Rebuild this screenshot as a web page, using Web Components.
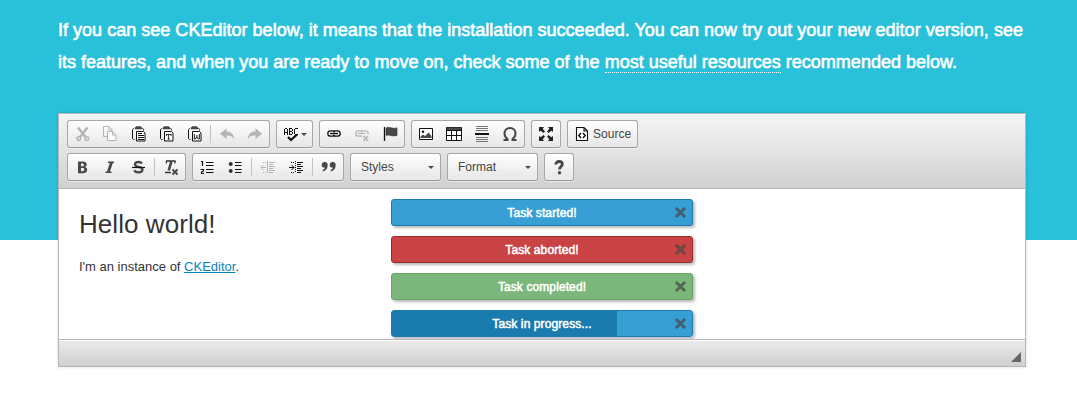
<!DOCTYPE html>
<html lang="en">
<head>
<meta charset="utf-8">
<title>CKEditor sample</title>
<style>
html,body{margin:0;height:100%;overflow:hidden;background:#fff}
body{font-family:"Liberation Sans",Arial,sans-serif}
</style>
</head>
<body>
<sample-page></sample-page>
<script>
const define=(name,html,setup)=>customElements.define(name,class extends HTMLElement{
  connectedCallback(){
    if(this.shadowRoot)return;
    const t=document.createElement('template');
    t.innerHTML=html;
    this.attachShadow({mode:'open'}).append(t.content.cloneNode(true));
    if(setup)setup(this,this.shadowRoot);
  }
});
const clip='<path d="M4 2.500H3.500L2.500 3.500v9l1 1H4.500M12.500 2.500h.5l.5 1V4.500" fill="none"/><path d="M4.800 3.200V1.500L6.500 .2h4L12 1.500v1.700z" fill="#444" stroke="none"/><path d="M6.500 5.500h7l1.500 1.500v8H6.500z" fill="#fff"/>';
const quote='M.7 6a3 3 0 0 1 6 0c0 3.300-1.600 5.600-4.700 6.400l-.5-1.300c1.500-.5 2.300-1.200 2.500-2.500C2 9 .7 7.800.7 6z';
const icons={
 cut:'<g fill="none" stroke-width="2"><path d="M4 1.500l7.500 9.500M13.500 1.500L6 11" stroke-width="2.400"/><circle cx="4.800" cy="12.600" r="1.800" stroke-width="1.500"/><circle cx="12.800" cy="12.600" r="1.800" stroke-width="1.500"/></g>',
 copy:'<path d="M5 10.500H1.500v-10h5.500l3 3V5M7 .5V4h3" fill="none"/><path d="M5.500 5.500h5l3.500 3.500v5.500H5.500zM10.500 5.500V9H14" fill="#fafafa"/>',
 paste:clip+'<path d="M8 7.500h4M8 9.500h5.500M8 11.500h5.500M8 13.500h5.500" shape-rendering="crispEdges"/>',
 text:clip+'<path d="M8 8.500h5.500M10.500 8.500v5M8.500 8v2M13 8v2" fill="none" stroke-width=".8"/><path d="M9.500 13h2.500" stroke-width=".8"/>',
 word:clip+'<path d="M8.300 8v5h1l1.500-2 1.500 2h1V8M10.800 9v2" fill="none" stroke-width="1"/>',
 undo:'<path d="M1 7.700L7.500 2.300v3.300c4.500 0 7.300 2.600 7.700 7.600-1.800-3-4.200-3.800-7.700-3.600v3.300z" stroke="none"/>',
 redo:'<path d="M15 7.700L8.500 2.300v3.300C4 5.600 1.200 8.200.8 13.200c1.800-3 4.200-3.800 7.700-3.600v3.300z" stroke="none"/>',
 spell:'<path d="M1.500 3v6M2 2.500h2M4.500 3v6M1 6.500h4M6.500 2v7M6 2.500h3M6 5.500h3M6 8.500h3M9.500 3v2M9.500 6v2M14.500 2.500H12M11.500 3v5M12 8.500h3" fill="none" shape-rendering="crispEdges"/><path d="M5 11l3 3 6-5.500" fill="none" stroke-width="2.300"/>',
 link:'<path d="M7.500 4.800H4.500a2.700 2.700 0 0 0 0 5.400H7.500L8.700 9M8.500 4.800h3a2.700 2.700 0 0 1 0 5.400h-3L7.300 9M7.200 6L8.500 4.800M8.800 6L7.500 4.800" fill="none" stroke-width="1.300"/><path d="M4 7.500h8" stroke-width="1.400"/>',
 unlink:'<path d="M7.500 4.800H4.500a2.700 2.700 0 0 0 0 5.400H8M8.500 4.800h3a2.700 2.700 0 0 1 2.600 3.400M7.200 6L8.500 4.800" fill="none" stroke-width="1.300"/><path d="M4 7.500h7.500" stroke-width="1.200"/><path d="M9.500 10l4.500 5M14 10l-4.500 5" stroke-width="1.700"/>',
 flag:'<path d="M2.500 1v14" stroke-width="1.300"/><path d="M4 2.200c3-2.500 6 1.400 11-.4v7.700C10 11 7 8 4 9.500z" fill="#484848" stroke="#333" stroke-width=".6"/>',
 image:'<path d="M1.500 2.500h13v11h-13z" fill="#fff"/><circle cx="5" cy="5.800" r="1.300" stroke="none"/><path d="M2.500 12V10.500L5 8.500l2 1.500 3.500-3.500 3 3.500V12z" stroke="none" fill="#484848"/>',
 table:'<path d="M.5 1.500h15v13H.5zM.5 9.500h15M5.500 5v9.500M10.500 5v9.500" fill="#fff"/><path d="M1 1.500h14v3H1z" stroke="none" fill="#484848"/><path d="M0 4.500h16"/>',
 hr:'<path d="M2 .5h12M2 2.500h12M2 4.500h12M2 11.500h12M2 13.500h12M2 15.500h12" stroke="#777"/><path d="M1 8h14" stroke-width="2"/>',
 omega:'<path d="M1.500 14h4v-1C3.500 11.500 2.500 9.500 2.500 7.500 2.500 4.300 4.800 2 8 2s5.500 2.300 5.500 5.500c0 2-1 4-3 5.500v1h4" fill="none" stroke="#484848" stroke-width="2"/>',
 max:'<g id="a" fill="#222" stroke="none"><path d="M1 1h5L4.700 2.700 7 5.500 5.500 7 2.700 4.700 1 6zM15 1h-5l1.300 1.700L9 5.500 10.500 7l2.800-2.300L15 6zM1 15h5l-1.300-1.700L7 10.500 5.500 9l-2.800 2.300L1 10zM15 15h-5l1.300-1.700L9 10.500 10.500 9l2.800 2.300L15 10z"/></g>',
 source:'<path d="M2.500 1.500h7.500l3.500 3.500v9.500h-11zM10 1.500V5h3.500" fill="#fff" stroke-width="1.100"/><path d="M7 7L4.800 9.500 7 12M9 7l2.200 2.500L9 12" fill="none" stroke-width="1.400"/>',
 bold:'<path d="M4 3h4.800c2.500 0 3.900 1.100 3.900 3 0 1.200-.7 2-1.700 2.500 1.400.4 2.200 1.300 2.200 2.800 0 2.200-1.600 3.400-4.200 3.400H4zM7 5v2.700h1.500c.9 0 1.400-.5 1.400-1.300S9.400 5 8.500 5zM7 9.600v3.100h1.700c1 0 1.600-.6 1.600-1.600s-.6-1.500-1.600-1.500z" fill-rule="evenodd" stroke="none" fill="#484848" transform="translate(0 -.5)"/>',
 italic:'<g transform="translate(0 -.5)"><path d="M6 3.700h6M3.500 13.700h6" stroke="#484848" stroke-width="1.500"/><path d="M9.500 4L6.300 13.500" stroke="#484848" stroke-width="2.800"/></g>',
 strike:'<path d="M12 4.500c-.8-1-2-1.500-3.500-1.500C6.300 3 5 4 5 5.500c0 3.300 7.500 1.500 7.500 5 0 1.800-1.500 2.900-4 2.900-2 0-3.500-.7-4.300-2" fill="none" stroke="#484848" stroke-width="2.300"/><path d="M2 8.500h13" stroke-width="1.200"/>',
 clear:'<path d="M3 2h9.500M2 13.500h6" stroke="#333" stroke-width="1.300"/><path d="M8.500 2L5.700 11.500" stroke="#484848" stroke-width="2.600"/><path d="M3.300 2v2.500M12.400 2L11.700 4.500"/><path d="M9.500 10.500l5 5M14.500 10.500l-5 5" stroke="#484848" stroke-width="1.900"/>',
 numbered:'<path d="M2 2.500h1.500V7M1.500 10.500h3v1.500l-2 1v1.500H5M7 3.500h7.500M7 6.500h7.500M7 10.500h7.500M7 13.500h7.500" fill="none" stroke-width="1.200"/>',
 bulleted:'<g fill="#333" stroke="none"><circle cx="3.700" cy="5" r="2"/><circle cx="3.700" cy="12" r="2"/></g><path d="M8 3.500h6.500M8 6.500h6.500M8 10.500h6.500M8 13.500h6.500" stroke-width="1.200"/>',
 outdent:'<path d="M7.500 2v12"/><path d="M9 3.500h6M9 5.500h4M9 7.500h6M9 9.500h4M9 11.500h6M9 13.500h4"/><path d="M1 8.500h5M3.500 6L1 8.500 3.500 11" fill="none"/><path d="M3 3.500h4M3 13.500h4" stroke-dasharray="1 1"/>',
 indent:'<path d="M7.500 2v12" stroke-dasharray="1 1"/><path d="M9 3.500h6M9 5.500h4M9 7.500h6M9 9.500h4M9 11.500h6M9 13.500h4"/><path d="M1 8.500h5M3.500 6L6 8.500 3.500 11" fill="none"/><path d="M3 3.500h4M3 13.500h4" stroke-dasharray="1 1"/>',
 quote:`<g fill="#484848" stroke="none"><path d="${quote}"/><path d="${quote}" transform="translate(8)"/></g>`,
 help:'<path d="M4.800 5.500c0-2 1.300-3 3.300-3s3.200 1 3.200 2.700C11.300 7.500 8.500 7.500 8.500 10.500" fill="none" stroke="#484848" stroke-width="2.800"/><circle cx="8.500" cy="13.700" r="1.700" fill="#484848" stroke="none"/>'
};
define('tool-icon',`<style>:host{display:block;width:16px;height:16px;padding:5px 6px;flex:none;color:#111}:host([off]){color:#b4b4b4}svg{display:block;overflow:visible}</style><svg width="16" height="16" viewBox="0 0 16 16" fill="currentColor" stroke="currentColor"></svg>`,
 (e,r)=>r.querySelector('svg').innerHTML=icons[e.getAttribute('name')]);
define('tool-sep','<style>:host{display:block;width:1px;height:18px;margin:4px 2px;background:#c3c3c3}</style>');
define('tool-group','<style>:host{display:flex;box-sizing:border-box;height:28px;border:1px solid #a6a6a6;border-bottom-color:#979797;border-radius:3px;background:linear-gradient(#fff,#e6e6e6);box-shadow:0 1px 0 rgba(255,255,255,.5),inset 0 0 2px rgba(255,255,255,.8)}</style><slot></slot>');
define('tool-label','<style>:host{display:block;font-size:12px;line-height:26px;color:#444;letter-spacing:.05px;margin-left:-3px;width:44px}</style><slot></slot>');
define('down-arrow','<style>:host{display:block;width:0;height:0;border:3px solid transparent;border-top-color:#484848;border-bottom:0;margin-top:12px}</style>');
define('tool-combo','<style>:host{display:flex;box-sizing:border-box;width:89px;height:26px;padding:0 6px 0 10px;justify-content:space-between;font-size:12px;line-height:26px;color:#444}</style><slot></slot><down-arrow></down-arrow>');
define('tool-row','<style>:host{display:flex;gap:6px;height:28px;margin-bottom:5px}</style><slot></slot>');
define('task-notice',`<style>
:host{display:flex;align-items:center;justify-content:center;position:relative;box-sizing:border-box;width:302px;height:27px;flex:none;border:1px solid #1b7bb0;border-radius:3px;background:#389fd4;box-shadow:2px 2px 3px rgba(0,0,0,.28);font-size:12px;line-height:15px;padding-top:1px;color:#fff;-webkit-text-stroke:.5px #fff;letter-spacing:.1px}
:host([type=error]){background:#c94344;border-color:#932d2e}
:host([type=ok]){background:#7bb77b;border-color:#63a563}
:host([type=progress]){background:linear-gradient(90deg,#1a7bae 225px,#389fd4 225px)}
svg{position:absolute;right:6px;top:7px}</style><slot></slot>
<svg width="11" height="11" viewBox="0 0 11 11" fill="none"><path d="M1 1l9 9M10 1l-9 9" stroke="#353535" stroke-opacity=".7" stroke-width="2.600"/><path d="M1.500 1.500l8 8M9.500 1.500l-8 8" stroke="#777" stroke-opacity=".7" stroke-width="1"/></svg>`);
define('rich-editor',`<style>
:host{display:flex;flex-direction:column;box-sizing:border-box;width:968px;height:254px;border:1px solid #b6b6b6;background:#fff;box-shadow:0 0 3px rgba(0,0,0,.15)}
header{height:68px;padding:6px 8px 0;box-sizing:content-box;background:linear-gradient(#f5f5f5,#cfd1cf);border-bottom:1px solid #b6b6b6;box-shadow:inset 0 1px #fff}
main{height:150px;display:flex;overflow:hidden;color:#333}
article{width:312px;padding-left:20px;box-sizing:content-box;flex:none;font-size:13px}
h1{font-weight:400;font-size:26px;line-height:30px;margin:20px 0 0;letter-spacing:.06px}
p{margin:20px 0 0;line-height:16px;letter-spacing:0}
a{color:#0782c1;text-decoration:underline}
section{display:flex;flex-direction:column;gap:10px;padding-top:10px}
footer{height:26px;display:flex;justify-content:flex-end;align-items:flex-end;border-top:1px solid #b6b6b6;background:linear-gradient(#ebebeb,#cfd1cf);box-shadow:inset 0 1px #fff}
footer svg{margin:0 4px 4px 0}
</style><header><slot name="tools"></slot></header>
<main><article><h1>Hello world!</h1><p>I'm an instance of <a>CKEditor</a>.</p></article>
<section><task-notice>Task started!</task-notice><task-notice type="error">Task aborted!</task-notice><task-notice type="ok">Task completed!</task-notice><task-notice type="progress">Task in progress...</task-notice></section></main>
<footer><svg width="10" height="10"><path d="M10 0v10H0z" fill="#666"/></svg></footer>`);
define('intro-text',`<style>:host{display:block;font-size:18px;line-height:32px;color:#fff;-webkit-text-stroke:.6px #fff;white-space:nowrap}div{height:32px}.a{letter-spacing:.02px}.b{letter-spacing:.005px}a{border-bottom:1px dotted #fff}</style><div class="a">If you can see CKEditor below, it means that the installation succeeded. You can now try out your new editor version, see</div><div class="b">its features, and when you are ready to move on, check some of the <a>most useful resources</a> recommended below.</div>`);
const I=(n,off)=>`<tool-icon name="${n}"${off?' off':''}></tool-icon>`;
define('sample-page',`<style>:host{display:block;box-sizing:border-box;height:412px;padding:14px 0 0 58px;background:linear-gradient(#29c0da 240px,#fff 240px)}
rich-editor{margin-top:35px}.arr{margin-left:-4px;margin-right:5px}</style>
<intro-text></intro-text>
<rich-editor><div slot="tools">
<tool-row>
<tool-group>${I('cut',1)+I('copy',1)+I('paste')+I('text')+I('word')}<tool-sep></tool-sep>${I('undo',1)+I('redo',1)}</tool-group>
<tool-group>${I('spell')}<down-arrow class="arr"></down-arrow></tool-group>
<tool-group>${I('link')+I('unlink',1)+I('flag')}</tool-group>
<tool-group>${I('image')+I('table')+I('hr')+I('omega')}</tool-group>
<tool-group>${I('max')}</tool-group>
<tool-group>${I('source')}<tool-label>Source</tool-label></tool-group>
</tool-row>
<tool-row>
<tool-group>${I('bold')+I('italic')+I('strike')}<tool-sep></tool-sep>${I('clear')}</tool-group>
<tool-group>${I('numbered')+I('bulleted')}<tool-sep></tool-sep>${I('outdent',1)+I('indent')}<tool-sep></tool-sep>${I('quote')}</tool-group>
<tool-group><tool-combo>Styles</tool-combo></tool-group>
<tool-group><tool-combo>Format</tool-combo></tool-group>
<tool-group>${I('help')}</tool-group>
</tool-row>
</div></rich-editor>`);
</script>
</body>
</html>
